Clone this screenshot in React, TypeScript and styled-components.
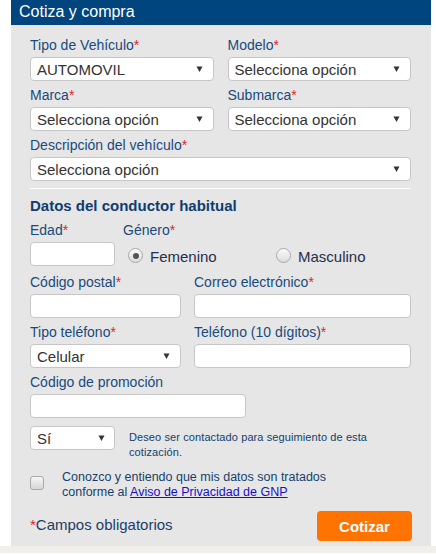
import React from 'react';
import styled, { createGlobalStyle } from 'styled-components';

const GlobalStyle = createGlobalStyle`
  html, body {
    margin: 0;
    padding: 0;
    background: #ffffff;
  }

  body {
    font-family: 'Liberation Sans', Arial, sans-serif;
  }

  * {
    box-sizing: border-box;
  }
`;

const Arrow: React.FC = () => (
  <svg width="7" height="7" viewBox="0 0 7 7" aria-hidden="true">
    <path d="M0.5 0.5 H6.5 L3.5 6 Z" fill="#333333" />
  </svg>
);

const Label: React.FC<{ text: string; required?: boolean }> = ({ text, required }) => (
  <FieldLabel>
    {text}
    {required && <Star>*</Star>}
  </FieldLabel>
);

const Select: React.FC<{ value: string; arrowGap?: number }> = ({ value, arrowGap = 10 }) => (
  <SelectBox $arrowGap={arrowGap}>
    <span>{value}</span>
    <Arrow />
  </SelectBox>
);

const Radio: React.FC<{ text: string; checked?: boolean }> = ({ text, checked }) => (
  <RadioOption>
    <RadioCircle $checked={checked} />
    <RadioText>{text}</RadioText>
  </RadioOption>
);

const App: React.FC = () => (
  <>
    <GlobalStyle />
    <Panel>
      <Header>Cotiza y compra</Header>
      <Body>
        <Row $cols="1fr 1fr" $gap={14}>
          <Field>
            <Label text="Tipo de Vehículo" required />
            <Select value="AUTOMOVIL" />
          </Field>
          <Field>
            <Label text="Modelo" required />
            <Select value="Selecciona opción" />
          </Field>
        </Row>
        <Row $cols="1fr 1fr" $gap={14} $top={4}>
          <Field>
            <Label text="Marca" required />
            <Select value="Selecciona opción" />
          </Field>
          <Field>
            <Label text="Submarca" required />
            <Select value="Selecciona opción" />
          </Field>
        </Row>
        <Row $cols="1fr" $top={4}>
          <Field>
            <Label text="Descripción del vehículo" required />
            <Select value="Selecciona opción" />
          </Field>
        </Row>

        <Divider />
        <SectionTitle>Datos del conductor habitual</SectionTitle>

        <Row $cols="85px 1fr" $gap={8} $top={4}>
          <Field>
            <Label text="Edad" required />
            <TextInput />
          </Field>
          <Field>
            <Label text="Género" required />
            <RadioGroup>
              <Radio text="Femenino" checked />
              <Radio text="Masculino" />
            </RadioGroup>
          </Field>
        </Row>
        <Row $cols="151px 1fr" $gap={13} $top={6}>
          <Field>
            <Label text="Código postal" required />
            <TextInput />
          </Field>
          <Field>
            <Label text="Correo electrónico" required />
            <TextInput />
          </Field>
        </Row>
        <Row $cols="151px 1fr" $gap={13} $top={4}>
          <Field>
            <Label text="Tipo teléfono" required />
            <Select value="Celular" />
          </Field>
          <Field>
            <Label text="Teléfono (10 dígitos)" required />
            <TextInput />
          </Field>
        </Row>
        <Row $cols="216px" $top={4}>
          <Field>
            <Label text="Código de promoción" />
            <TextInput />
          </Field>
        </Row>

        <ContactRow>
          <SmallSelect>
            <Select value="Sí" arrowGap={9} />
          </SmallSelect>
          <ContactText>Deseo ser contactado para seguimiento de esta cotización.</ContactText>
        </ContactRow>

        <PrivacyRow>
          <CheckBox />
          <PrivacyText>
            Conozco y entiendo que mis datos son tratados
            <br />
            conforme al <PrivacyLink href="#">Aviso de Privacidad de GNP</PrivacyLink>
          </PrivacyText>
        </PrivacyRow>

        <Footer>
          <RequiredNote>
            <Star>*</Star>Campos obligatorios
          </RequiredNote>
          <SubmitButton type="button">Cotizar</SubmitButton>
        </Footer>
      </Body>
    </Panel>
    <BottomStrip />
  </>
);

const Panel = styled.section`
  width: 420px;
  margin-left: 11px;
  background: #e6e6e6;
`;

const Header = styled.h2`
  margin: 0;
  height: 25px;
  padding: 0 0 2px 8px;
  background: #00457d;
  color: #ffffff;
  font-size: 16px;
  font-weight: normal;
  line-height: 23px;
`;

const Body = styled.div`
  padding: 10px 20px 5px 19px;
`;

const Row = styled.div<{ $cols: string; $gap?: number; $top?: number }>`
  display: grid;
  grid-template-columns: ${(p) => p.$cols};
  column-gap: ${(p) => p.$gap ?? 0}px;
  margin-top: ${(p) => p.$top ?? 0}px;
`;

const Field = styled.div`
  display: flex;
  flex-direction: column;
  min-width: 0;
`;

const FieldLabel = styled.label`
  display: block;
  height: 20px;
  margin-bottom: 2px;
  color: #194a7d;
  font-size: 14px;
  line-height: 20px;
  white-space: nowrap;
`;

const Star = styled.span`
  color: #e0232c;
`;

const SelectBox = styled.div<{ $arrowGap: number }>`
  display: flex;
  align-items: center;
  justify-content: space-between;
  height: 24px;
  padding: 1px ${(p) => p.$arrowGap}px 0 6px;
  background: #ffffff;
  border: 1px solid #c6c6c6;
  border-radius: 4px;
  color: #333333;
  font-size: 15px;
  line-height: 22px;
  white-space: nowrap;
`;

const TextInput = styled.input.attrs({ type: 'text' })`
  display: block;
  width: 100%;
  height: 24px;
  margin: 0;
  padding: 0 6px;
  background: #ffffff;
  border: 1px solid #c6c6c6;
  border-radius: 4px;
  font: inherit;
  font-size: 15px;
  outline: none;
`;

const Divider = styled.hr`
  height: 1px;
  margin: 7px 0 0;
  border: 0;
  background: #ffffff;
`;

const SectionTitle = styled.h3`
  margin: 7px 0 0;
  color: #0f3d6f;
  font-size: 15px;
  font-weight: bold;
  line-height: 20px;
`;

const RadioGroup = styled.div`
  display: grid;
  grid-template-columns: 148px auto;
  height: 24px;
  padding-left: 5px;
`;

const RadioOption = styled.label`
  display: flex;
  align-items: flex-start;
  gap: 7px;
`;

const RadioCircle = styled.span<{ $checked?: boolean }>`
  position: relative;
  flex: none;
  width: 15px;
  height: 15px;
  margin-top: 6px;
  border: 1px solid #a9a9a9;
  border-radius: 50%;
  background: linear-gradient(#fbfbfb, #dcdcdc);

  &::after {
    content: '';
    display: ${(p) => (p.$checked ? 'block' : 'none')};
    position: absolute;
    top: 3.5px;
    left: 3.5px;
    width: 6px;
    height: 6px;
    border-radius: 50%;
    background: #555555;
  }
`;

const RadioText = styled.span`
  margin-top: 6px;
  color: #272d4c;
  font-size: 15px;
  line-height: 18px;
`;

const ContactRow = styled.div`
  display: flex;
  align-items: flex-start;
  gap: 14px;
  margin-top: 8px;
`;

const SmallSelect = styled.div`
  flex: none;
  width: 85px;
`;

const ContactText = styled.p`
  width: 240px;
  margin: 4px 0 0;
  color: #123f6e;
  font-size: 11px;
  line-height: 15px;
  letter-spacing: 0.1px;
`;

const PrivacyRow = styled.div`
  display: flex;
  align-items: flex-start;
  gap: 18px;
  margin-top: 10px;
`;

const CheckBox = styled.span`
  flex: none;
  width: 14px;
  height: 14px;
  margin-top: 6px;
  border: 1px solid #a9a9a9;
  border-radius: 3px;
  background: linear-gradient(#f6f6f6, #d6d6d6);
`;

const PrivacyText = styled.p`
  margin: 0;
  color: #163f6f;
  font-size: 12.5px;
  line-height: 15px;
`;

const PrivacyLink = styled.a`
  color: #1a0dcc;
  text-decoration: underline;
`;

const Footer = styled.div`
  display: flex;
  align-items: flex-start;
  justify-content: space-between;
  margin-top: 11px;
`;

const RequiredNote = styled.p`
  margin: 4px 0 0;
  color: #1b3d68;
  font-size: 15px;
  line-height: 20px;
`;

const SubmitButton = styled.button`
  width: 95px;
  height: 30px;
  margin-right: -1px;
  padding: 0;
  border: 0;
  border-radius: 4px;
  background: #ff7300;
  color: #ffffff;
  font-family: inherit;
  font-size: 15px;
  font-weight: bold;
  cursor: pointer;
`;

const BottomStrip = styled.div`
  height: 7px;
  background: #f0efec;
`;

export default App;
